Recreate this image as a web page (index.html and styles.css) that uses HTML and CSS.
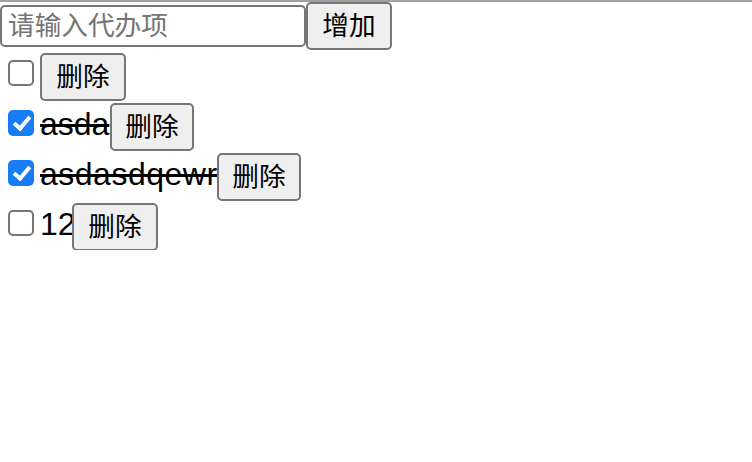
FILE: index.html
```html
<!DOCTYPE html>
<html lang="zh">
<head>
<meta charset="utf-8">
<title>Todo</title>
<link rel="stylesheet" href="styles.css">
</head>
<body>
<div class="top-line"></div>
<div class="add-row">
  <input class="todo-input" type="text" placeholder="请输入代办项">
  <button class="btn btn-add">增加</button>
</div>
<ul class="todo-list">
  <li class="todo-item">
    <input class="todo-check" type="checkbox">
    <span class="todo-text w-empty"></span>
    <button class="btn">删除</button>
  </li>
  <li class="todo-item">
    <input class="todo-check" type="checkbox" checked>
    <span class="todo-text done w-short">asda</span>
    <button class="btn btn-tight">删除</button>
  </li>
  <li class="todo-item">
    <input class="todo-check" type="checkbox" checked>
    <span class="todo-text done w-long">asdasdqewr</span>
    <button class="btn btn-tight">删除</button>
  </li>
  <li class="todo-item">
    <input class="todo-check" type="checkbox">
    <span class="todo-text w-num">12</span>
    <button class="btn">删除</button>
  </li>
</ul>
</body>
</html>
```
FILE: styles.css
```css
html, body {
  margin: 0;
  padding: 0;
  background: #ffffff;
}

body {
  font-family: "Liberation Sans", "Noto Sans CJK SC", sans-serif;
  font-size: 32px;
  color: #000000;
}

.top-line {
  height: 2px;
  background: #a0a0a0;
}

.add-row {
  display: flex;
  align-items: center;
  height: 48px;
}

.todo-input {
  box-sizing: border-box;
  width: 306px;
  height: 42px;
  margin: 0;
  padding: 0 6px;
  border: 2px solid #767676;
  border-radius: 5px;
  font-family: "Liberation Sans", "Noto Sans CJK SC", sans-serif;
  font-size: 26.67px;
  color: #000;
  background: #fff;
  outline: none;
}

.todo-input::placeholder {
  color: #757575;
}

.btn {
  position: relative;
  box-sizing: border-box;
  width: 86px;
  height: 48px;
  margin: 0;
  padding: 0;
  border: 2px solid #767676;
  border-radius: 5px;
  background: #efefef;
  font-family: "Liberation Sans", "Noto Sans CJK SC", sans-serif;
  font-size: 26.67px;
  color: #000;
  line-height: 1;
  flex-shrink: 0;
}

.btn-tight {
  width: 84px;
}

.todo-list {
  list-style: none;
  margin: 0;
  padding: 0;
}

.todo-item {
  display: flex;
  align-items: flex-start;
  height: 50px;
}

.todo-item .btn {
  margin-top: 3px;
}

.todo-check {
  position: relative;
  appearance: none;
  -webkit-appearance: none;
  box-sizing: border-box;
  width: 26px;
  height: 26px;
  margin: 10px 6px 0 8px;
  border: 2.5px solid #767676;
  border-radius: 5px;
  background: #fff;
  flex-shrink: 0;
}

.todo-check:checked {
  border: none;
  background: #1a7cf5;
}

.todo-check:checked::after {
  content: "";
  position: absolute;
  left: 9px;
  top: 3px;
  width: 6px;
  height: 13px;
  border-right: 4px solid #fff;
  border-bottom: 4px solid #fff;
  transform: rotate(40deg);
}

.todo-text {
  margin-top: 6px;
  line-height: 37px;
  white-space: nowrap;
  letter-spacing: 0.5px;
}

.w-empty { width: 0; }
.w-short { width: 70px; letter-spacing: 0; }
.w-long { width: 177px; }
.w-num { width: 32px; letter-spacing: 0; }

.done {
  text-decoration: line-through;
}
```
